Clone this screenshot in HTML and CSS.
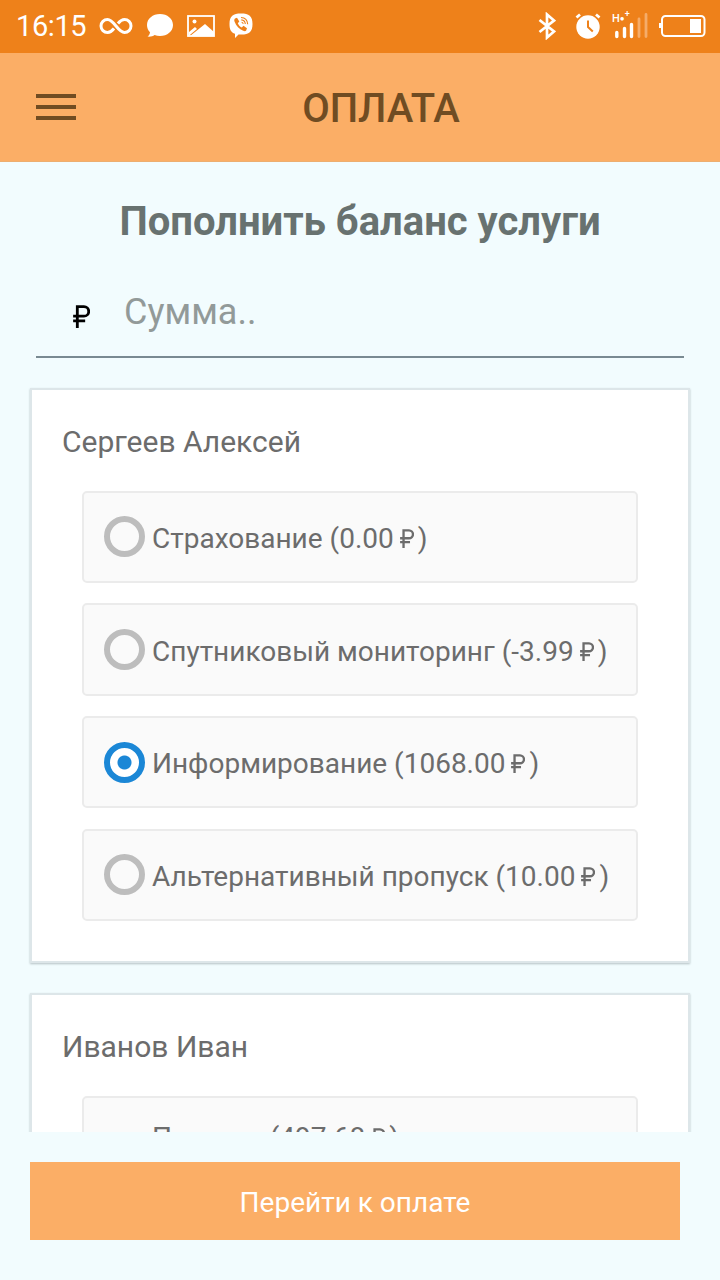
FILE: index.html
```
<!doctype html>
<html lang="ru">
  <head>
    <meta charset="utf-8">
    <meta name="viewport" content="width=device-width, initial-scale=1.0">
    <title>Оплата</title>
    <link rel="stylesheet" href="styles.css">
  </head>
  <body>
    <svg class="defs">
      <symbol id="ruble" viewBox="0 0 16 22">
        <path d="M4 22V1.500h6.300a4.600 4.600 0 0 1 0 9.200H0M0 15.200h11.500" fill="none" stroke="currentColor" stroke-width="2.700"/>
      </symbol>
    </svg>

    <div class="status">
      <span class="clock">16:15</span>
      <svg class="infinity" width="34" height="20" viewBox="0 0 34 20">
        <path d="M15 12.500C13 15 11.500 16.500 8.500 16.500a6.500 6.500 0 0 1 0-13C15 3.500 19 16.500 25.500 16.500a6.500 6.500 0 0 0 0-13c-3 0-4.500 1.500-6.500 4" fill="none" stroke="#fff" stroke-width="3"/>
      </svg>
      <svg class="bubble" width="28" height="26" viewBox="0 0 28 26">
        <path d="M14 1c7.300 0 13 4.700 13 11s-5.700 11-13 11c-2 0-3.800-.3-5.400-.9C7 23.300 4 24 1.500 23.600 3 22.500 3.800 21 4 19.300 2 17.300 1 14.800 1 12 1 5.700 6.700 1 14 1z" fill="#fff"/>
      </svg>
      <svg class="photo" width="28" height="22" viewBox="0 0 28 22">
        <rect x="1" y="1" width="26" height="20" fill="none" stroke="#fff" stroke-width="1.800"/>
        <circle cx="7.500" cy="6.500" r="2" fill="#fff"/>
        <path d="M2 17l6-5 2 2-6 5-2 2zM3 21L18 9l9 8v4z" fill="#fff"/>
      </svg>
      <svg class="viber" width="24" height="25" viewBox="0 0 24 25">
        <path d="M12 .5C20 .5 23.500 3 23.500 11S20 21.500 12.500 21.500h-3L6 25v-4.200C2 19.500.5 16.500.5 11 .5 3 4 .5 12 .5z" fill="#fff"/>
        <path d="M6 5.500l2-.7 2.300 3.700-1.500 1.700c.8 2 2 3.300 4 4.200l1.700-1.600 3.500 2.500-.8 2.200c-.7.9-1.700.8-3 .3-4-1.600-7-4.800-8.600-9-.5-1.300-.5-2.500.4-3.300z" fill="#ee811a"/>
        <path d="M12 4.500c4 .2 6.500 2.700 6.700 6.800M12.300 6.900c2.400.2 3.800 1.700 4 4.100M12.600 9.200c1 .1 1.500.7 1.600 1.700" fill="none" stroke="#ee811a" stroke-width="1.100"/>
      </svg>
      <svg class="bluetooth" width="18" height="28" viewBox="0 0 18 28">
        <path d="M1.500 8l14.500 11.500L9 25.500v-23L16 8.500 1.500 20" fill="none" stroke="#fff" stroke-width="2.700"/>
      </svg>
      <svg class="alarm" width="26" height="26" viewBox="0 0 26 26">
        <circle cx="13" cy="14" r="11.700" fill="#fff"/>
        <path d="M1.500 4.500l3.500-3M24.500 4.500l-3.500-3" stroke="#fff" stroke-width="2.800"/>
        <path d="M13 7.500V14l4.800 4.500" fill="none" stroke="#ee811a" stroke-width="2"/>
      </svg>
      <div class="signal">
        <span class="network">H<i>●</i><sup>+</sup></span>
        <svg width="36" height="26" viewBox="0 0 36 26">
          <path d="M4.800 23.500v-4M12.500 23.500v-8M19.500 23.500v-12" stroke="#fff" stroke-width="3.400" stroke-linecap="round"/>
          <path d="M27 23.500V6M34 23.500V1.500" stroke="#f5ac69" stroke-width="2.800" stroke-linecap="round"/>
        </svg>
      </div>
      <svg class="battery" width="47" height="24" viewBox="0 0 47 24">
        <rect x="3" y="2" width="42.500" height="20" rx="3.500" fill="none" stroke="#fff" stroke-width="2"/>
        <path d="M1.200 9v5" stroke="#fff" stroke-width="2.400"/>
        <rect x="31" y="5" width="11" height="14" fill="#fff"/>
      </svg>
    </div>

    <header>
      <div class="burger"><span></span><span></span><span></span></div>
      <h1>ОПЛАТА</h1>
    </header>

    <main>
      <h2>Пополнить баланс услуги</h2>
      <div class="amount">
        <svg class="ruble-big"><use href="#ruble"/></svg>
        <span>Сумма..</span>
      </div>

      <section class="card">
        <h3>Сергеев Алексей</h3>
        <div class="option">
          <span class="radio"></span>
          <span class="label">Страхование (0.00<svg class="ruble"><use href="#ruble"/></svg>)</span>
        </div>
        <div class="option">
          <span class="radio"></span>
          <span class="label">Спутниковый мониторинг (-3.99<svg class="ruble"><use href="#ruble"/></svg>)</span>
        </div>
        <div class="option">
          <span class="radio checked"></span>
          <span class="label">Информирование (1068.00<svg class="ruble"><use href="#ruble"/></svg>)</span>
        </div>
        <div class="option">
          <span class="radio"></span>
          <span class="label">Альтернативный пропуск (10.00<svg class="ruble"><use href="#ruble"/></svg>)</span>
        </div>
      </section>

      <section class="card">
        <h3>Иванов Иван</h3>
        <div class="option plain">
          <span class="label">Пропуск (497.68<svg class="ruble"><use href="#ruble"/></svg>)</span>
        </div>
      </section>
    </main>

    <footer>
      <button>Перейти к оплате</button>
    </footer>
  </body>
</html>
```
FILE: styles.css
```
* {
  box-sizing: border-box;
}

body {
  margin: 0;
  height: 1280px;
  display: flex;
  flex-direction: column;
  overflow: hidden;
  background: #f2fcfe;
  color: #6c6c6c;
  font-family: Roboto, sans-serif;
}

h1, h2, h3 {
  margin: 0;
}

svg {
  flex: none;
}

.defs {
  display: none;
}

/* status bar */
.status {
  flex: none;
  display: flex;
  align-items: center;
  height: 53px;
  padding: 0 14px 2px 16px;
  background: #ee811a;
  color: #fff;
}
.clock {
  width: 83px;
  font-size: 29px;
  letter-spacing: -0.4px;
}
.bubble {
  margin-left: 13px;
}
.photo {
  margin-left: 13px;
}
.viber {
  margin-left: 14px;
}
.bluetooth {
  margin-left: auto;
}
.alarm {
  margin-left: 19px;
}
.signal {
  position: relative;
  height: 26px;
  margin-left: 11px;
}
.network {
  position: absolute;
  top: -1px;
  left: 0;
  font-size: 11px;
  font-weight: 500;
  line-height: 13px;
  white-space: nowrap;
}
.network i {
  font-size: 8px;
  vertical-align: 1px;
}
.network sup {
  font-size: 9px;
  line-height: 0;
}
.battery {
  margin-left: 11px;
}

/* title bar */
header {
  flex: none;
  display: flex;
  align-items: center;
  height: 109px;
  padding: 0 36px;
  background: #fbae66;
  border-bottom: 1px solid #edae70;
  color: #704c22;
}
.burger {
  display: flex;
  flex-direction: column;
  gap: 7px;
  width: 40px;
}
.burger span {
  height: 4px;
  background: #704c22;
}
h1 {
  flex: 1;
  padding: 3px 0 0 2px;
  text-align: center;
  font-size: 40px;
  font-weight: 500;
}

main {
  height: 970px;
  padding: 0 30px;
  overflow: hidden;
}
h2 {
  height: 118px;
  padding-top: 36px;
  text-align: center;
  font-size: 40px;
  line-height: 48px;
  color: #687270;
}

.amount {
  display: flex;
  align-items: center;
  height: 78px;
  margin: 0 6px 30px;
  padding: 0 0 12px 37px;
  border-bottom: 2px solid #798a92;
  font-size: 36px;
  color: #929a99;
}
.ruble-big {
  width: 17px;
  height: 23px;
  margin: 9px 34px 0 0;
  color: #000;
}

.card {
  height: 575px;
  margin-bottom: 30px;
  padding: 30px 50px 0;
  background: #fff;
  border: 2px solid #dde6e9;
  box-shadow: 0 1px 2px #b4c0c3;
}
.card h3 {
  height: 70.6px;
  margin-left: -20px;
  font-size: 30px;
  font-weight: 400;
  line-height: 44px;
}

.option {
  display: flex;
  align-items: center;
  height: 92.500px;
  margin-bottom: 20.200px;
  padding-left: 20px;
  background: #fafafa;
  border: 2px solid #ebebeb;
  border-radius: 5px;
  font-size: 28px;
  white-space: nowrap;
}
.label {
  padding-top: 3px;
}
.radio {
  width: 41px;
  height: 41px;
  margin-right: 7px;
  border: 6px solid #bdbdbd;
  border-radius: 50%;
}
.checked {
  border-color: #1b87d6;
  background: radial-gradient(circle, #1b87d6 6.5px, #fff 7.5px);
}
.ruble {
  width: 14px;
  height: 19px;
  margin: 0 4px 0 6px;
}
.plain {
  padding: 0 0 11px 68px;
}

footer {
  padding: 30px 40px 0 30px;
}
button {
  display: block;
  width: 650px;
  height: 78px;
  padding: 2px 0 0;
  border: 0;
  background: #fbae66;
  color: #fff;
  font-family: Roboto, sans-serif;
  font-size: 28px;
}
```
